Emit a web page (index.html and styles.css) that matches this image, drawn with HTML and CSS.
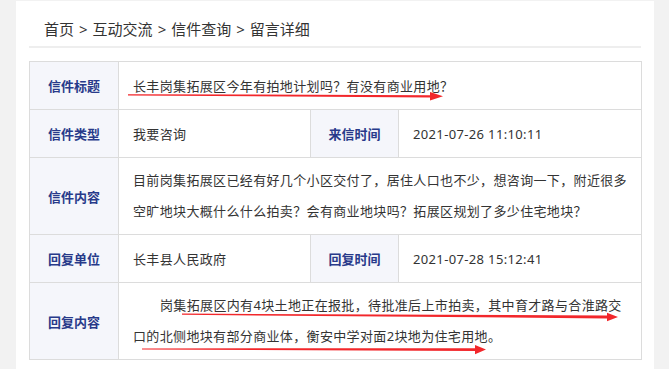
FILE: index.html
```html
<!DOCTYPE html>
<html lang="zh-CN">
<head>
  <meta charset="UTF-8">
  <title>留言详细</title>
  <link rel="stylesheet" href="styles.css">
</head>
<body>

  <div class="panel">
    <div class="crumbs">首页<span class="sep">&gt;</span>互动交流<span class="sep">&gt;</span>信件查询<span class="sep">&gt;</span>留言详细</div>

    <table class="letter">
      <colgroup>
        <col class="c-label">
        <col class="c-value">
        <col class="c-label2">
        <col class="c-value2">
      </colgroup>
      <tr class="row-short">
        <th>信件标题</th>
        <td colspan="3">长丰岗集拓展区今年有拍地计划吗？有没有商业用地？</td>
      </tr>
      <tr class="row-short">
        <th>信件类型</th>
        <td>我要咨询</td>
        <th>来信时间</th>
        <td>2021-07-26 11:10:11</td>
      </tr>
      <tr class="row-tall">
        <th>信件内容</th>
        <td colspan="3" class="text">目前岗集拓展区已经有好几个小区交付了，居住人口也不少，想咨询一下，附近很多<br>空旷地块大概什么什么拍卖？会有商业地块吗？拓展区规划了多少住宅地块？</td>
      </tr>
      <tr class="row-short">
        <th>回复单位</th>
        <td>长丰县人民政府</td>
        <th>回复时间</th>
        <td>2021-07-28 15:12:41</td>
      </tr>
      <tr class="row-tall">
        <th>回复内容</th>
        <td colspan="3" class="text reply">岗集拓展区内有4块土地正在报批，待批准后上市拍卖，其中育才路与合淮路交<br>口的北侧地块有部分商业体，衡安中学对面2块地为住宅用地。</td>
      </tr>
    </table>
  </div>

  <!-- red marker arrows drawn over the screenshot -->
  <svg class="marks" width="669" height="369" viewBox="0 0 669 369">
    <polygon points="128,94.2 430,95.2 430,92 443,96.3 430,100.6 430,97.6 128,95.4" />
    <polygon points="182,313.6 607,315.4 607,312.8 618,317 607,321.2 607,318.4 182,314.8" />
    <polygon points="142,348.4 475,348.2 475,345 486,349.6 475,354.2 475,351 142,349.6" />
  </svg>

</body>
</html>
```

FILE: styles.css
```css
body {
  margin: 0;
  background: #f2f2f2;
  font-family: "Noto Sans", "Noto Sans CJK SC", sans-serif;
  position: relative;
}

.panel {
  width: 612px;
  height: 368px;
  margin: 1px 0 0 16px;
  padding: 0 13px;
  background: #fff;
}

.crumbs {
  height: 45px;
  line-height: 57px;
  padding-left: 15px;
  font-size: 15px;
  color: #333;
  border-bottom: 2px solid #eeeeee;
  margin-bottom: 13px;
}

.crumbs .sep {
  margin: 0 5px;
}

.letter {
  width: 612px;
  border-collapse: collapse;
  table-layout: fixed;
  font-size: 13px;
  color: #333;
}

.c-label {
  width: 89px;
}

.c-value {
  width: 192px;
}

.c-label2 {
  width: 88px;
}

.c-value2 {
  width: 243px;
}

.letter th,
.letter td {
  border: 1px solid #dcdcdc;
  padding: 0 6px 0 14px;
}

.letter th {
  padding: 0;
  background: #f5f6fb;
  color: #283a8a;
  font-weight: bold;
  text-align: center;
}

.letter td {
  text-align: left;
  letter-spacing: 0.35px;
}

.row-short {
  height: 48px;
}

.row-tall {
  height: 77px;
}

.text {
  line-height: 31px;
}

.reply {
  text-indent: 27px;
}

.marks {
  position: absolute;
  top: 0;
  left: 0;
  pointer-events: none;
}

.marks polygon {
  fill: #f2272b;
}
```
